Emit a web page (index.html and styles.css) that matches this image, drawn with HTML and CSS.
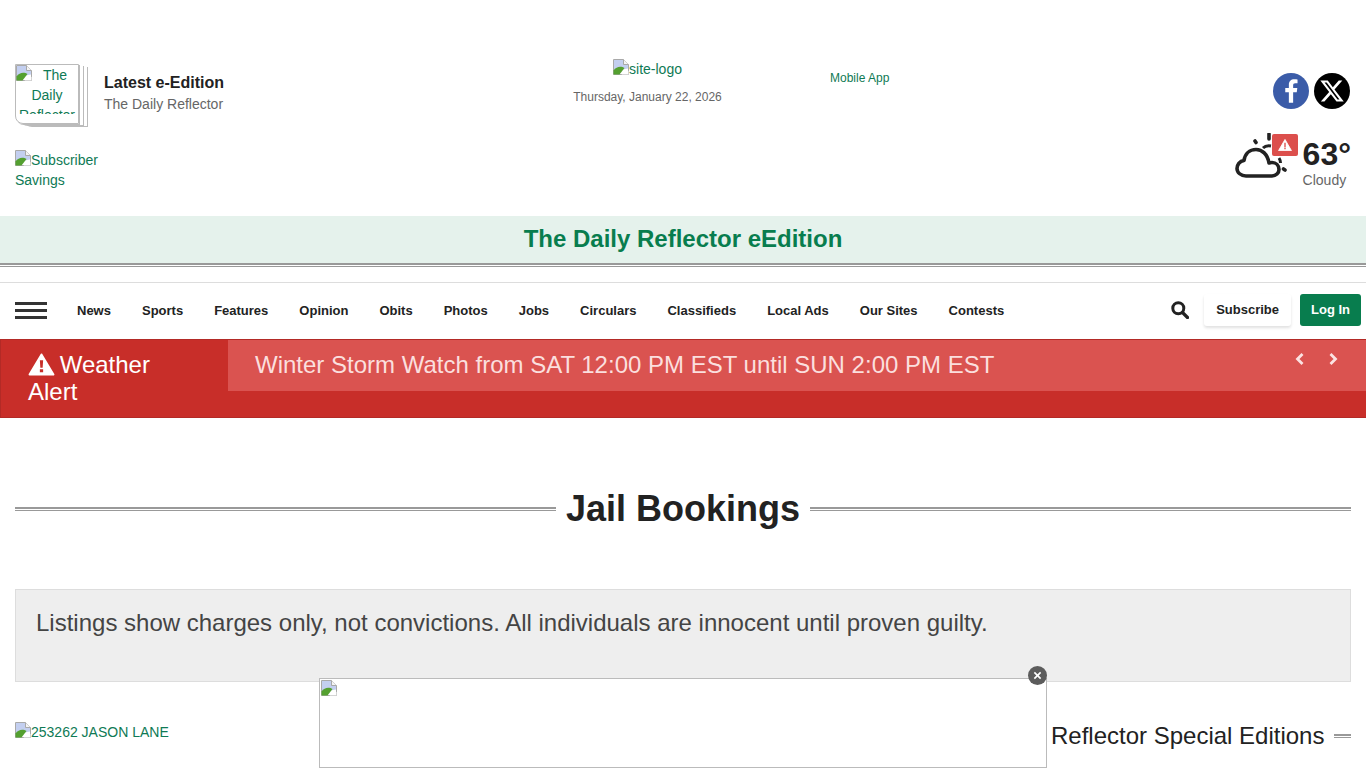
FILE: index.html
```html
<!DOCTYPE html>
<html lang="en">
<head>
    <meta charset="UTF-8">
    <meta name="viewport" content="width=device-width, initial-scale=1.0">
    <title>Jail Bookings | The Daily Reflector</title>
    <link rel="stylesheet" href="styles.css">
</head>
<body>
    <!-- broken image placeholder, reused wherever the site images failed -->
    <svg class="defs" width="0" height="0">
        <symbol id="broken" viewBox="0 0 16 16">
            <path d="M.5.5h10l5 5v10H.5z" fill="#fff" stroke="#a9a9a9"/>
            <path d="M1 1h9.500l4.500 4.500v4L1 12z" fill="#c3cff0"/>
            <path d="M10.500.5v5h5" fill="#f4f4f4" stroke="#a9a9a9"/>
            <path d="M.5 15.500v-4c3-4.500 8-4.500 11-2.500l-5 6.500z" fill="#54a030"/>
            <path d="M8.500 15.500l4.500-5 2.500 1.500v3.500z" fill="#fff"/>
        </symbol>
    </svg>

    <header class="masthead">
        <div class="masthead-left">
            <div class="edition">
                <a class="edition-thumb" href="#">
                    <span class="edition-clip"><svg class="broken"><use href="#broken"/></svg>The Daily Reflector</span>
                </a>
                <div class="edition-text">
                    <strong>Latest e-Edition</strong>
                    <span>The Daily Reflector</span>
                </div>
            </div>
            <a class="savings" href="#"><svg class="broken"><use href="#broken"/></svg>Subscriber Savings</a>
        </div>
        <div class="masthead-center">
            <a class="logo" href="#"><svg class="broken"><use href="#broken"/></svg>site-logo</a>
            <div class="date">Thursday, January 22, 2026</div>
        </div>
        <a class="mobile-app" href="#">Mobile App</a>
        <div class="masthead-right">
            <div class="social">
                <a class="social-icon fb" href="#" aria-label="Facebook">
                    <svg viewBox="2.400 2.500 32 32" width="36" height="36">
                        <path d="M20.300 29V19.600h3.200l.5-3.800h-3.700v-2.300c0-1.100.4-1.800 1.900-1.800h2V8.300c-.4 0-1.500-.2-2.900-.2-2.900 0-4.800 1.700-4.800 4.900v2.800h-3.200v3.800H16.500V29z" fill="#fff"/>
                    </svg>
                </a>
                <a class="social-icon x" href="#" aria-label="X">
                    <svg viewBox="0 0 24 24" width="26" height="26">
                        <path d="M18.244 2.250h3.308l-7.227 8.260 8.502 11.240H16.170l-5.214-6.817L4.990 21.750H1.680l7.730-8.835L1.254 2.250H8.080l4.713 6.231zm-1.161 17.520h1.833L7.084 4.126H5.117z" fill="#fff"/>
                    </svg>
                </a>
            </div>
            <div class="weather">
                <div class="weather-icon">
                    <svg viewBox="0 0 56 46" width="56" height="46">
                        <path d="M11 43H37c4 0 7-3 7-6.500 0-4-3-7-7-7-1 0-2 .2-3 .5C32.500 21 27 16.500 21 16.500c-6.500 0-11 4.500-12 11C4.500 28 2 32 2 35.500 2 39.500 6 43 11 43z" fill="none" stroke="#222" stroke-width="3.600" stroke-linejoin="round"/>
                        <path d="M28 15c2-2 5-2.500 8-2M44 25c1 1.500 1.500 3 1.500 5" fill="none" stroke="#222" stroke-width="3"/>
                        <path d="M20 8l1 1.500M34 1v5M48.500 36l1.500 1" stroke="#222" stroke-width="3.600" stroke-linecap="round"/>
                    </svg>
                    <span class="weather-badge">
                        <svg viewBox="0 0 16 14" width="14" height="12">
                            <path d="M8 .5L15.500 13.500H.5z" fill="#fff" stroke="#fff" stroke-linejoin="round"/>
                            <path d="M7.200 4.500h1.600v5H7.200zM7.200 10.300h1.600v1.600H7.200z" fill="#dc4f4c"/>
                        </svg>
                    </span>
                </div>
                <div class="weather-text">
                    <div class="temp">63°</div>
                    <div class="sky">Cloudy</div>
                </div>
            </div>
        </div>
    </header>

    <div class="band">The Daily Reflector eEdition</div>
    <div class="double-rule band-rule"></div>

    <nav class="nav">
        <button class="hamburger" aria-label="Menu"><span></span><span></span><span></span></button>
        <ul class="nav-links">
            <li><a href="#">News</a></li>
            <li><a href="#">Sports</a></li>
            <li><a href="#">Features</a></li>
            <li><a href="#">Opinion</a></li>
            <li><a href="#">Obits</a></li>
            <li><a href="#">Photos</a></li>
            <li><a href="#">Jobs</a></li>
            <li><a href="#">Circulars</a></li>
            <li><a href="#">Classifieds</a></li>
            <li><a href="#">Local Ads</a></li>
            <li><a href="#">Our Sites</a></li>
            <li><a href="#">Contests</a></li>
        </ul>
        <svg class="search" viewBox="0 0 18 18" width="18" height="18">
            <circle cx="7.300" cy="7.300" r="5.500" fill="none" stroke="#222" stroke-width="3"/>
            <path d="M11.500 11.500l5 5" stroke="#222" stroke-width="3.200" stroke-linecap="round"/>
        </svg>
        <a class="btn-subscribe" href="#">Subscribe</a>
        <a class="btn-login" href="#">Log In</a>
    </nav>

    <section class="alert">
        <div class="alert-label">
            <svg viewBox="0 0 28 24" width="27" height="23">
                <path d="M14 1.500L26.500 22.500H1.500z" fill="#fff" stroke="#fff" stroke-width="2" stroke-linejoin="round"/>
                <path d="M12.300 7.500h3.400l-.5 8h-2.400zM12.300 17h3.400v3.200h-3.400z" fill="#c82e29"/>
            </svg>
            Weather Alert
        </div>
        <div class="alert-message">
            <a href="#">Winter Storm Watch from SAT 12:00 PM EST until SUN 2:00 PM EST</a>
            <div class="alert-arrows">
                <svg viewBox="0 0 10 14" width="10" height="14"><path d="M7.500 2L2.500 7l5 5" fill="none" stroke="#fbe3e2" stroke-width="2.800"/></svg>
                <svg viewBox="0 0 10 14" width="10" height="14"><path d="M2.500 2l5 5-5 5" fill="none" stroke="#fbe3e2" stroke-width="2.800"/></svg>
            </div>
        </div>
    </section>

    <main class="content">
        <div class="page-title">
            <div class="double-rule"></div>
            <h1>Jail Bookings</h1>
            <div class="double-rule"></div>
        </div>

        <div class="notice">Listings show charges only, not convictions. All individuals are innocent until proven guilty.</div>

        <div class="columns">
            <a class="booking" href="#"><svg class="broken"><use href="#broken"/></svg>253262 JASON LANE</a>
            <div class="sidebar-title">
                <h2>Reflector Special Editions</h2>
                <div class="double-rule"></div>
            </div>
        </div>
    </main>

    <aside class="ad">
        <svg class="broken"><use href="#broken"/></svg>
        <button class="ad-close" aria-label="Close">
            <svg viewBox="0 0 10 10" width="9" height="9"><path d="M1.500 1.500l7 7M8.500 1.500l-7 7" stroke="#fff" stroke-width="1.800"/></svg>
        </button>
    </aside>
</body>
</html>
```

FILE: styles.css
```css
html, body {
    height: 768px;
    overflow: hidden;
}

body {
    margin: 0;
    font-family: "Liberation Sans", Arial, sans-serif;
    font-size: 14px;
    line-height: 20px;
    color: #222;
    background: #fff;
}

a {
    color: #0f7a55;
    text-decoration: none;
}

.defs {
    position: absolute;
}

.broken {
    width: 16px;
    height: 16px;
    vertical-align: -1px;
}

/* masthead */
.masthead {
    display: flex;
    height: 216px;
    padding: 0 15px;
    box-sizing: border-box;
}

.masthead-left {
    flex: 0 0 558px;
    padding-top: 64px;
}

.edition {
    display: flex;
    gap: 25px;
}

.edition-thumb {
    display: block;
    box-sizing: border-box;
    width: 64px;
    height: 60px;
    border: 1px solid #bbb;
    border-radius: 0 0 0 8px;
    text-align: center;
    box-shadow: 1px 1px 0 #bbb, 4px 1px 0 #fff, 5px 2px 0 #bbb, 8px 2px 0 #fff, 9px 3px 0 #bbb;
}

.edition-clip {
    display: block;
    height: 49px;
    overflow: hidden;
}

.edition-clip .broken {
    float: left;
}

.edition-text {
    display: flex;
    flex-direction: column;
    padding-top: 8px;
}

.edition-text strong {
    font-size: 16px;
    line-height: 21px;
}

.edition-text span {
    color: #666;
    line-height: 22px;
}

.savings {
    display: block;
    width: 100px;
    margin-top: 26px;
}

.masthead-center {
    flex: 0 0 149px;
    padding-top: 59px;
    text-align: center;
}

.logo {
    display: block;
}

.date {
    margin-top: 8px;
    font-size: 12px;
    color: #666;
}

.mobile-app {
    margin: 68px 0 0 108px;
    font-size: 12px;
}

.masthead-right {
    margin-left: auto;
    display: flex;
    flex-direction: column;
    align-items: flex-end;
    padding-top: 73px;
}

.social {
    display: flex;
    gap: 5px;
    margin-right: 1px;
}

.social-icon {
    display: flex;
    align-items: center;
    justify-content: center;
    width: 36px;
    height: 36px;
    border-radius: 50%;
}

.fb {
    background: #3b5ca8;
}

.x {
    background: #000;
}

.weather {
    display: flex;
    gap: 5px;
    margin-top: 24px;
}

.weather-icon {
    position: relative;
    width: 63px;
    height: 46px;
}

.weather-badge {
    position: absolute;
    top: 1px;
    right: 0;
    display: flex;
    align-items: center;
    justify-content: center;
    width: 26px;
    height: 22px;
    border-radius: 2px;
    background: #dc4f4c;
}

.temp {
    font-size: 32px;
    font-weight: bold;
    line-height: 42px;
}

.sky {
    color: #666;
    line-height: 14px;
    margin-top: -2px;
}

/* green band */
.band {
    height: 47px;
    background: #e5f2ec;
    color: #087d4e;
    font-size: 24px;
    font-weight: bold;
    line-height: 46px;
    text-align: center;
}

.double-rule {
    height: 1px;
    border-top: 2px solid #999;
    border-bottom: 1px solid #999;
}

.band-rule {
    margin-bottom: 15px;
}

/* nav */
.nav {
    display: flex;
    align-items: center;
    height: 56px;
    padding: 0 5px 0 15px;
    border-top: 1px solid #ddd;
    font-weight: bold;
}

.hamburger {
    display: flex;
    flex-direction: column;
    gap: 4px;
    width: 32px;
    margin-bottom: 2px;
    padding: 0;
    border: 0;
    background: none;
}

.hamburger span {
    display: block;
    height: 3px;
    background: #333;
}

.nav-links {
    display: flex;
    gap: 31px;
    margin: 0 0 0 30px;
    padding: 0;
    list-style: none;
    font-size: 13px;
}

.nav-links a {
    color: #222;
}

.search {
    margin: 0 0 2px auto;
}

.btn-subscribe {
    margin: 0 0 2px 15px;
    padding: 6px 12px;
    border-radius: 3px;
    color: #222;
    font-size: 13px;
    box-shadow: 0 2px 3px rgba(0,0,0,0.12);
}

.btn-login {
    margin: 0 0 2px 9px;
    padding: 6px 11px;
    border-radius: 3px;
    background: #087d4e;
    color: #fff;
    font-size: 13px;
}

/* weather alert */
.alert {
    display: flex;
    height: 79px;
    box-sizing: border-box;
    background: #c82e29;
    border: 1px solid #b32a26;
    border-right: 0;
}

.alert-label {
    flex: 0 0 227px;
    box-sizing: border-box;
    padding: 11px 47px 0 27px;
    color: #fff;
    font-size: 24px;
    line-height: 27px;
}

.alert-label svg {
    margin-right: -2px;
    vertical-align: -3px;
}

.alert-message {
    flex: 1;
    display: flex;
    justify-content: space-between;
    height: 51px;
    padding-left: 27px;
    background: #da5350;
}

.alert-message a {
    color: #fbdfde;
    font-size: 24px;
    line-height: 50px;
}

.alert-arrows {
    display: flex;
    gap: 23px;
    height: 14px;
    margin: 12px 28px 0 0;
}

/* content */
.content {
    padding: 0 15px;
}

.page-title {
    display: flex;
    align-items: center;
    gap: 10px;
    margin-top: 71px;
    height: 40px;
}

.page-title .double-rule {
    flex: 1;
}

.page-title h1 {
    margin: 0;
    font-size: 36px;
    line-height: 40px;
}

.notice {
    box-sizing: border-box;
    height: 93px;
    margin-top: 60px;
    padding: 19px 20px 0;
    border: 1px solid #ddd;
    background: #eee;
    color: #444;
    font-size: 24px;
    line-height: 27px;
}

.columns {
    display: flex;
    justify-content: space-between;
    margin-top: 40px;
}

.sidebar-title {
    display: flex;
    align-items: center;
    gap: 10px;
    width: 300px;
}

.sidebar-title h2 {
    margin: 0;
    font-size: 24px;
    font-weight: normal;
    line-height: 27px;
    white-space: nowrap;
}

.sidebar-title .double-rule {
    flex: 1;
}

/* sticky ad */
.ad {
    position: fixed;
    left: 319px;
    bottom: 0;
    box-sizing: border-box;
    width: 728px;
    height: 90px;
    padding: 1px;
    border: 1px solid #bbb;
    background: #fff;
}

.ad .broken {
    display: block;
}

.ad-close {
    position: absolute;
    top: -13px;
    right: -1px;
    display: flex;
    align-items: center;
    justify-content: center;
    width: 19px;
    height: 19px;
    padding: 0;
    border: 0;
    border-radius: 50%;
    background: #5c5c5c;
}
```
